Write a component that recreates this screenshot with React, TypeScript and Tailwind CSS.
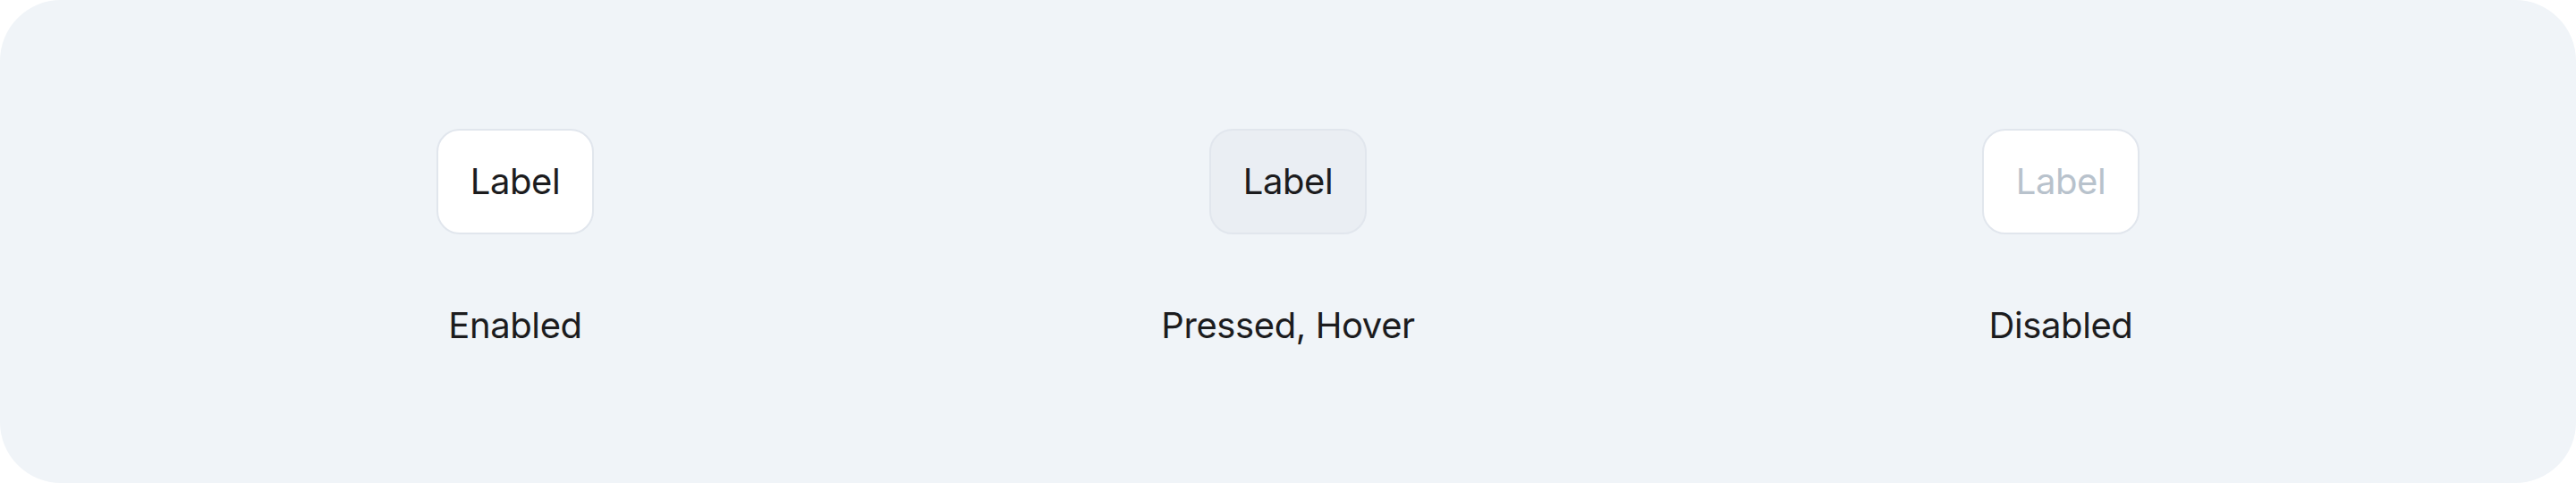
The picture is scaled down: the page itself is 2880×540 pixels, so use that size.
const STATES = [
  { caption: "Enabled", variant: "enabled" },
  { caption: "Pressed, Hover", variant: "pressed" },
  { caption: "Disabled", variant: "disabled" },
] as const;

type Variant = (typeof STATES)[number]["variant"];

function StateButton({ variant }: { variant: Variant }) {
  const tone =
    variant === "pressed"
      ? "bg-[#eaeef3] text-[#1c1c1e]"
      : variant === "disabled"
        ? "bg-white text-[#b8c2cc]"
        : "bg-white text-[#1c1c1e]";
  return (
    <button
      type="button"
      disabled={variant === "disabled"}
      className={`rounded-[26px] border-2 border-[#e1e6ed] px-[36px] py-[33px] text-[40px] leading-[48px] tracking-[-0.4px] ${tone}`}
    >
      Label
    </button>
  );
}

export default function App() {
  return (
    <div className="h-[540px] w-[2880px] bg-white font-['Inter',sans-serif]">
      <div className="grid h-full grid-cols-3 rounded-[68px] bg-[#f0f4f8] px-[144px] pt-[144px]">
        {STATES.map(({ caption, variant }) => (
          <div key={caption} className="flex flex-col items-center gap-[78px]">
            <StateButton variant={variant} />
            <span className="text-[40px] leading-[48px] tracking-[-0.4px] text-[#1c1c1e]">{caption}</span>
          </div>
        ))}
      </div>
    </div>
  );
}
